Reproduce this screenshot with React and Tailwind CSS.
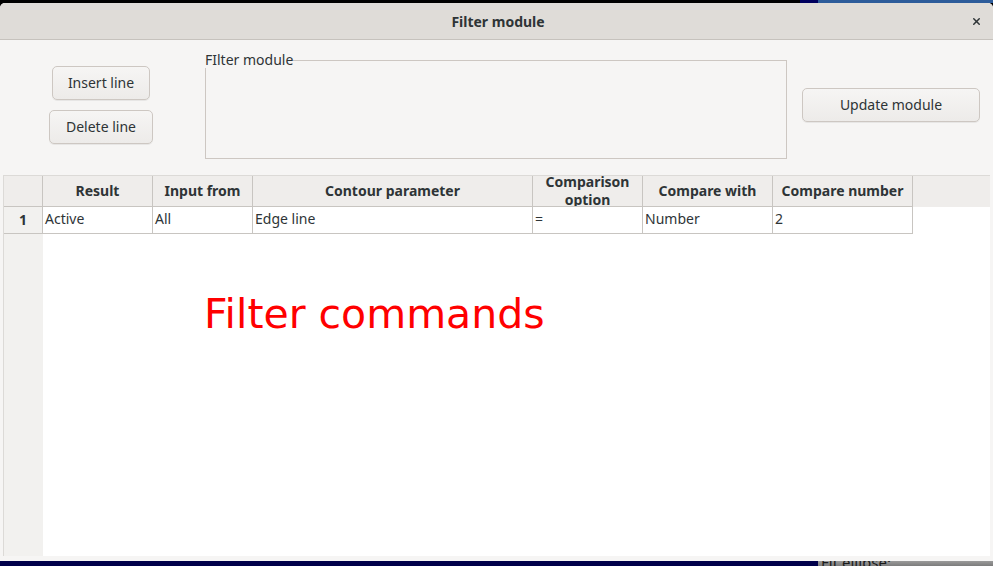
import { X } from 'lucide-react';

const ui = "font-['Noto_Sans',_'Open_Sans',_sans-serif]";

const columns = [
  { key: 'result', label: 'Result', value: 'Active', width: 'w-[110px]' },
  { key: 'input', label: 'Input from', value: 'All', width: 'w-[100px]' },
  { key: 'contour', label: 'Contour parameter', value: 'Edge line', width: 'w-[280px]' },
  { key: 'option', label: 'Comparison option', value: '=', width: 'w-[110px]' },
  { key: 'with', label: 'Compare with', value: 'Number', width: 'w-[130px]' },
  { key: 'number', label: 'Compare number', value: '2', width: 'w-[140px]' },
];

const Button = ({ children, className = '' }) => (
  <button
    className={`h-[34px] pb-[2px] rounded-[5px] border border-[#cdc7c2] bg-gradient-to-b from-[#f6f5f4] to-[#edebe9] text-[14px] text-[#2e3436] shadow-[0_1px_0_rgba(0,0,0,0.06)] ${className}`}
  >
    {children}
  </button>
);

const App = () => {
  return (
    <div className={`w-[993px] h-[566px] overflow-hidden bg-black flex flex-col ${ui}`}>
      {/* desktop behind, top */}
      <div className="flex h-[3px] shrink-0">
        <div className="flex-1 bg-black" />
        <div className="w-[18px] bg-[#00005e]" />
        <div className="w-[175px] bg-[#2d5c9a]" />
      </div>

      {/* Window */}
      <div className="flex-1 flex flex-col rounded-t-[5px] overflow-hidden bg-[#f6f5f4]">
        {/* Title bar */}
        <div className="h-[37px] shrink-0 flex items-center border-b border-[#c6c2bd] bg-[#dfdcd8]">
          <div className="flex-1" />
          <span className="text-[14px] font-bold text-[#2e3436] pl-[14px]">Filter module</span>
          <div className="flex-1 flex justify-end pr-[11px]">
            <X size={11} strokeWidth={3.2} className="text-[#2e3436]" />
          </div>
        </div>

        {/* Controls */}
        <div className="h-[135px] shrink-0 flex items-start">
          <div className="ml-[49px] mt-[26px] w-[104px] flex flex-col items-center gap-[10px]">
            <Button className="w-[98px]">Insert line</Button>
            <Button className="w-[104px]">Delete line</Button>
          </div>

          <fieldset className="ml-[52px] mt-[12px] w-[582px] h-[107px] border border-[#cdc7c2]">
            <legend className="p-0 -ml-px text-[14px] leading-[16px] text-[#2e3436]">FIlter module</legend>
          </fieldset>

          <Button className="ml-[15px] mt-[48px] w-[178px]">Update module</Button>
        </div>

        {/* Table */}
        <div className="mx-[3px] h-[381px] shrink-0 flex flex-col border-t border-l border-[#dcdad7] text-[14px] text-[#2e3436]">
          <div className="h-[31px] shrink-0 flex bg-[#efedeb]">
            <div className="w-[39px] shrink-0 border-r border-b border-[#c8c5c1]" />
            {columns.map((c) => (
              <div
                key={c.key}
                className={`${c.width} shrink-0 border-r border-b border-[#c8c5c1] flex items-center justify-center overflow-hidden font-bold leading-[18px] text-center`}
              >
                <span className="block w-full px-[4px]">{c.label}</span>
              </div>
            ))}
            <div className="flex-1" />
          </div>

          <div className="flex-1 flex min-h-0">
            <div className="w-[39px] shrink-0 bg-[#f2f1ef]">
              <div className="h-[27px] pb-[2px] border-r border-b border-[#c8c5c1] flex items-center justify-center font-bold">1</div>
            </div>
            <div className="flex-1 bg-white flex flex-col">
              <div className="h-[27px] shrink-0 flex">
                {columns.map((c) => (
                  <div
                    key={c.key}
                    className={`${c.width} shrink-0 border-r border-b border-[#c8c5c1] flex items-center pl-[2px] pb-[3px] whitespace-nowrap`}
                  >
                    {c.value}
                  </div>
                ))}
              </div>
              <div className="ml-[161px] mt-[60px] text-[41px] leading-none text-[#ff0000] font-['DejaVu_Sans',_sans-serif]">
                Filter commands
              </div>
            </div>
          </div>
        </div>
        <div className="flex-1" />
      </div>

      {/* desktop behind, bottom */}
      <div className="flex h-[5px] shrink-0 overflow-hidden">
        <div className="w-[818px] bg-[#00004a]" />
        <div className="flex-1 bg-gradient-to-b from-[#9a9a9a] to-[#7c7c7c] overflow-hidden">
          <div className="-mt-[7px] pl-[3px] text-[15px] leading-[16px] text-[#1a1a1a]">Fit ellipse:</div>
        </div>
      </div>
    </div>
  );
};

export default App;
